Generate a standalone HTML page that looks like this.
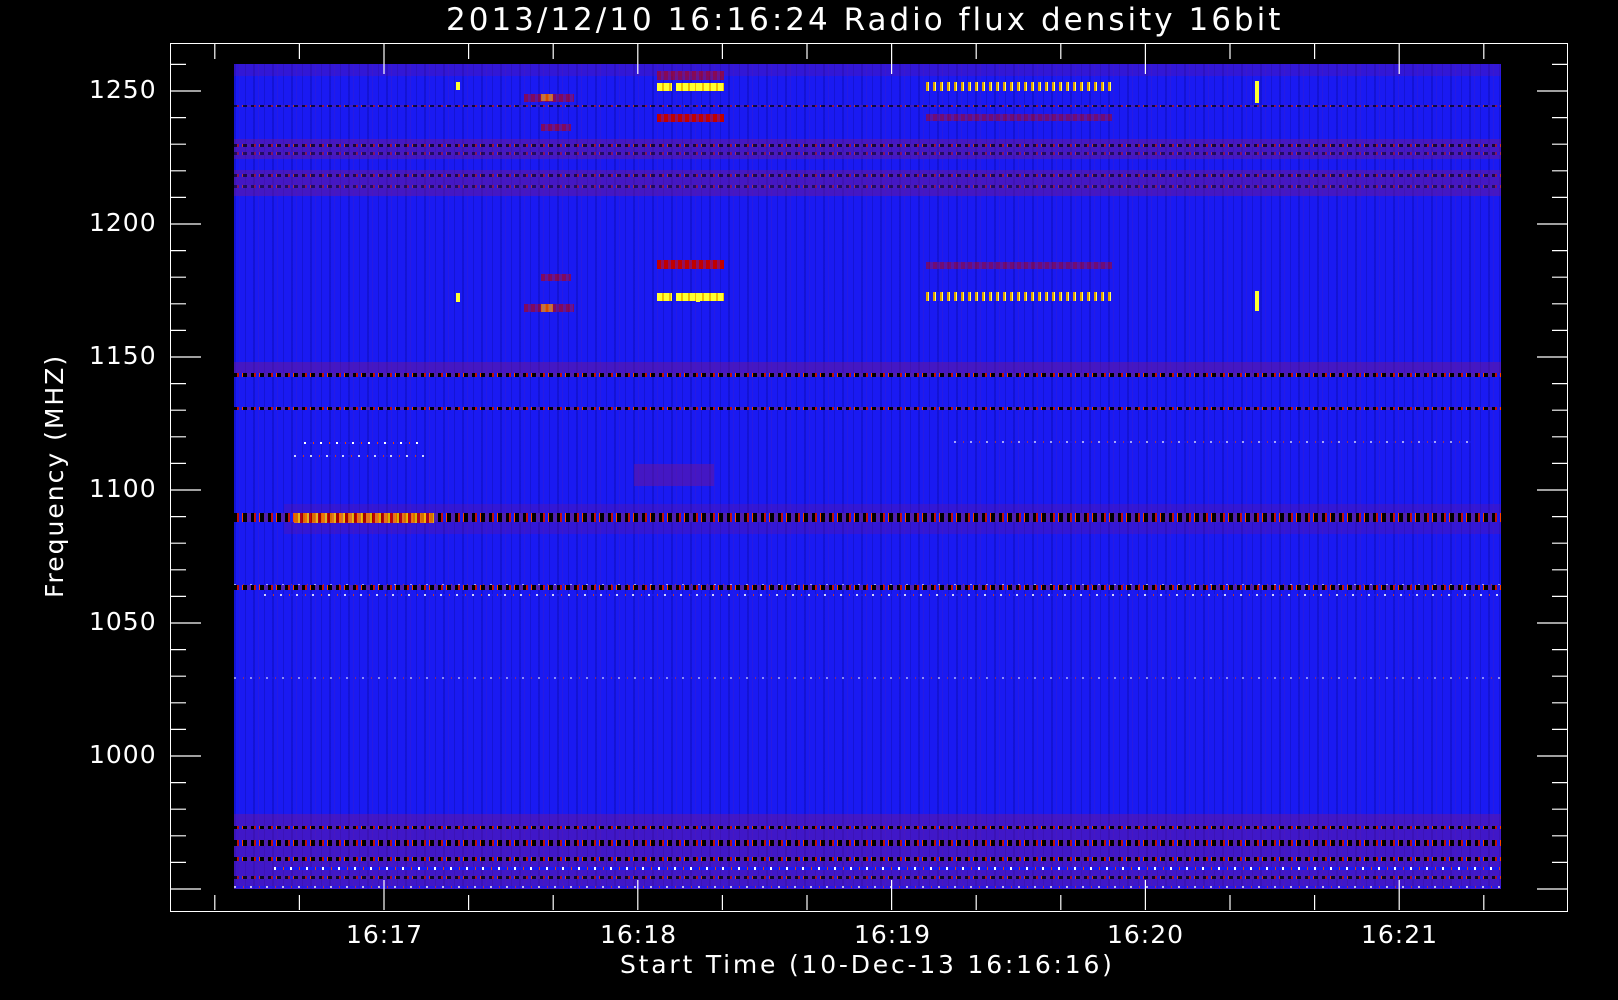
<!DOCTYPE html>
<html><head><meta charset="utf-8"><style>
html,body{margin:0;padding:0;background:#000;width:1618px;height:1000px;overflow:hidden}
body{position:relative;font-family:"DejaVu Sans","Liberation Sans",sans-serif;color:#fff}
.t{position:absolute;font-size:25px;white-space:nowrap;letter-spacing:1px}
#frame{position:absolute;left:170px;top:43px;width:1396px;height:867px;border:1px solid #fff}
#spec{position:absolute;left:234px;top:64px;width:1267px;height:825px;background:#1a1af2;overflow:hidden}
#spec div{position:absolute}
.tex{left:0;top:0;width:1267px;height:825px;background:repeating-linear-gradient(90deg,rgba(0,0,120,.25) 0 2px,transparent 2px 5px,rgba(90,30,160,.2) 5px 6px,transparent 6px 11px,rgba(0,0,90,.2) 11px 12px,transparent 12px 19px)}
.n{background:repeating-linear-gradient(90deg,#000 0 3px,#c01010 3px 5px,#1a1af2 5px 8px,#ff4000 8px 9px,#000 9px 13px,#5020b0 13px 17px)}
.r{background:repeating-linear-gradient(90deg,#c00000 0 4px,#901060 4px 7px)}
.y{background:repeating-linear-gradient(90deg,#ffff30 0 5px,#f0c000 5px 7px)}
.v{background:repeating-linear-gradient(90deg,#e0a000 0 2px,#ffff60 2px 3px,#1a1af2 3px 7px)}
.d{background:repeating-linear-gradient(90deg,#fff 0 2px,#1a1af2 2px 9px,#f04000 9px 10px,#1a1af2 10px 16px)}
.p{background:rgba(120,20,140,.45)}
</style></head><body>
<div class="t" style="left:446px;top:2px;font-size:31px;letter-spacing:3px">2013/12/10 16:16:24 Radio flux density 16bit</div>
<div id="frame"></div>
<div id="spec">
 <div class="tex"></div>
 <div class="p" style="left:0;top:0;width:1267px;height:12px;opacity:.6"></div>
 <div class="n" style="left:0;top:41px;width:1267px;height:2px;opacity:.7"></div>
 <div class="p" style="left:0;top:75px;width:1267px;height:20px"></div>
 <div class="n" style="left:0;top:80px;width:1267px;height:3px;opacity:.7"></div>
 <div class="n" style="left:0;top:88px;width:1267px;height:3px;opacity:.5"></div>
 <div class="p" style="left:0;top:106px;width:1267px;height:26px"></div>
 <div class="n" style="left:0;top:110px;width:1267px;height:3px;opacity:.6"></div>
 <div class="n" style="left:0;top:121px;width:1267px;height:3px;opacity:.5"></div>
 <div class="y" style="left:423px;top:19px;width:15px;height:8px"></div>
 <div class="y" style="left:442px;top:19px;width:48px;height:8px"></div>
 <div class="r" style="left:423px;top:50px;width:67px;height:8px"></div>
 <div class="r" style="left:423px;top:7px;width:67px;height:9px;opacity:.6"></div>
 <div class="y" style="left:307px;top:30px;width:12px;height:7px"></div>
 <div class="r" style="left:290px;top:30px;width:50px;height:8px;opacity:.6"></div>
 <div class="r" style="left:307px;top:60px;width:30px;height:7px;opacity:.6"></div>
 <div class="v" style="left:692px;top:18px;width:186px;height:9px"></div>
 <div class="r" style="left:692px;top:50px;width:186px;height:7px;opacity:.5"></div>
 <div class="y" style="left:1021px;top:17px;width:4px;height:22px"></div>
 <div class="y" style="left:462px;top:19px;width:4px;height:8px"></div>
 <div class="y" style="left:222px;top:18px;width:4px;height:8px"></div>
 <div class="y" style="left:423px;top:229px;width:15px;height:8px"></div>
 <div class="y" style="left:442px;top:229px;width:48px;height:8px"></div>
 <div class="r" style="left:423px;top:196px;width:67px;height:9px"></div>
 <div class="y" style="left:307px;top:240px;width:12px;height:8px"></div>
 <div class="r" style="left:290px;top:240px;width:50px;height:8px;opacity:.6"></div>
 <div class="r" style="left:307px;top:210px;width:30px;height:7px;opacity:.6"></div>
 <div class="v" style="left:692px;top:228px;width:186px;height:9px"></div>
 <div class="r" style="left:692px;top:198px;width:186px;height:7px;opacity:.5"></div>
 <div class="y" style="left:1021px;top:227px;width:4px;height:20px"></div>
 <div class="y" style="left:462px;top:229px;width:4px;height:9px"></div>
 <div class="y" style="left:222px;top:229px;width:4px;height:9px"></div>
 <div class="p" style="left:0;top:298px;width:1267px;height:12px"></div>
 <div class="n" style="left:0;top:309px;width:1267px;height:4px"></div>
 <div class="n" style="left:0;top:343px;width:1267px;height:3px"></div>
 <div class="d" style="left:70px;top:378px;width:120px;height:2px"></div>
 <div class="d" style="left:60px;top:391px;width:130px;height:2px;opacity:.8"></div>
 <div class="d" style="left:720px;top:377px;width:520px;height:2px;opacity:.6"></div>
 <div class="p" style="left:400px;top:400px;width:80px;height:22px"></div>
 <div class="p" style="left:50px;top:440px;width:1217px;height:30px;opacity:.6"></div>
 <div class="n" style="left:0;top:449px;width:1267px;height:9px"></div>
 <div style="left:60px;top:449px;width:140px;height:10px;background:repeating-linear-gradient(90deg,#ff8000 0 4px,#ffd000 4px 6px,#c00000 6px 9px);opacity:.85"></div>
 <div class="d" style="left:0;top:520px;width:1267px;height:2px;opacity:.6"></div>
 <div class="n" style="left:0;top:521px;width:1267px;height:5px"></div>
 <div class="d" style="left:30px;top:530px;width:1237px;height:2px;opacity:.8"></div>
 <div class="d" style="left:0;top:613px;width:1267px;height:2px;opacity:.5"></div>
 <div class="p" style="left:0;top:750px;width:1267px;height:75px;opacity:.9"></div>
 <div class="n" style="left:0;top:762px;width:1267px;height:3px"></div>
 <div class="n" style="left:0;top:776px;width:1267px;height:6px"></div>
 <div class="n" style="left:0;top:793px;width:1267px;height:4px"></div>
 <div class="d" style="left:40px;top:803px;width:1227px;height:3px"></div>
 <div class="n" style="left:0;top:812px;width:1267px;height:3px;opacity:.8"></div>
 <div class="d" style="left:0;top:822px;width:1267px;height:2px;opacity:.7"></div>
</div>
<div class="t" style="left:89px;top:75px">1250</div>
<div class="t" style="left:89px;top:208px">1200</div>
<div class="t" style="left:89px;top:341px">1150</div>
<div class="t" style="left:89px;top:474px">1100</div>
<div class="t" style="left:89px;top:607px">1050</div>
<div class="t" style="left:89px;top:740px">1000</div>
<div class="t" style="left:40px;top:598px;transform:rotate(-90deg);transform-origin:0 0;letter-spacing:2px">Frequency (MHZ)</div>
<div class="t" style="left:346px;top:920px">16:17</div>
<div class="t" style="left:600px;top:920px">16:18</div>
<div class="t" style="left:854px;top:920px">16:19</div>
<div class="t" style="left:1107px;top:920px">16:20</div>
<div class="t" style="left:1361px;top:920px">16:21</div>
<div class="t" style="left:620px;top:950px;letter-spacing:2.8px">Start Time (10-Dec-13 16:16:16)</div>
<svg width="1618" height="1000" style="position:absolute;left:0;top:0" stroke="#fff" stroke-width="1.2">
<path d="M171 64.4h15M171 91h30M171 117.6h15M171 144.2h15M171 170.8h15M171 197.4h15M171 224h30M171 250.6h15M171 277.2h15M171 303.8h15M171 330.4h15M171 357h30M171 383.6h15M171 410.2h15M171 436.8h15M171 463.4h15M171 490h30M171 516.6h15M171 543.2h15M171 569.8h15M171 596.4h15M171 623h30M171 649.6h15M171 676.2h15M171 702.8h15M171 729.4h15M171 756h30M171 782.6h15M171 809.2h15M171 835.8h15M171 862.4h15M171 889h30"/>
<path d="M1567 64.4h-15M1567 91h-30M1567 117.6h-15M1567 144.2h-15M1567 170.8h-15M1567 197.4h-15M1567 224h-30M1567 250.6h-15M1567 277.2h-15M1567 303.8h-15M1567 330.4h-15M1567 357h-30M1567 383.6h-15M1567 410.2h-15M1567 436.8h-15M1567 463.4h-15M1567 490h-30M1567 516.6h-15M1567 543.2h-15M1567 569.8h-15M1567 596.4h-15M1567 623h-30M1567 649.6h-15M1567 676.2h-15M1567 702.8h-15M1567 729.4h-15M1567 756h-30M1567 782.6h-15M1567 809.2h-15M1567 835.8h-15M1567 862.4h-15M1567 889h-30"/>
<path d="M214.8 910v-15M299.4 910v-15M384 910v-30M468.6 910v-15M553.2 910v-15M637.8 910v-30M722.4 910v-15M807 910v-15M891.6 910v-30M976.2 910v-15M1060.8 910v-15M1145.4 910v-30M1230 910v-15M1314.6 910v-15M1399.2 910v-30M1483.8 910v-15"/>
<path d="M214.8 44v15M299.4 44v15M384 44v30M468.6 44v15M553.2 44v15M637.8 44v30M722.4 44v15M807 44v15M891.6 44v30M976.2 44v15M1060.8 44v15M1145.4 44v30M1230 44v15M1314.6 44v15M1399.2 44v30M1483.8 44v15"/>
</svg>
</body></html>
